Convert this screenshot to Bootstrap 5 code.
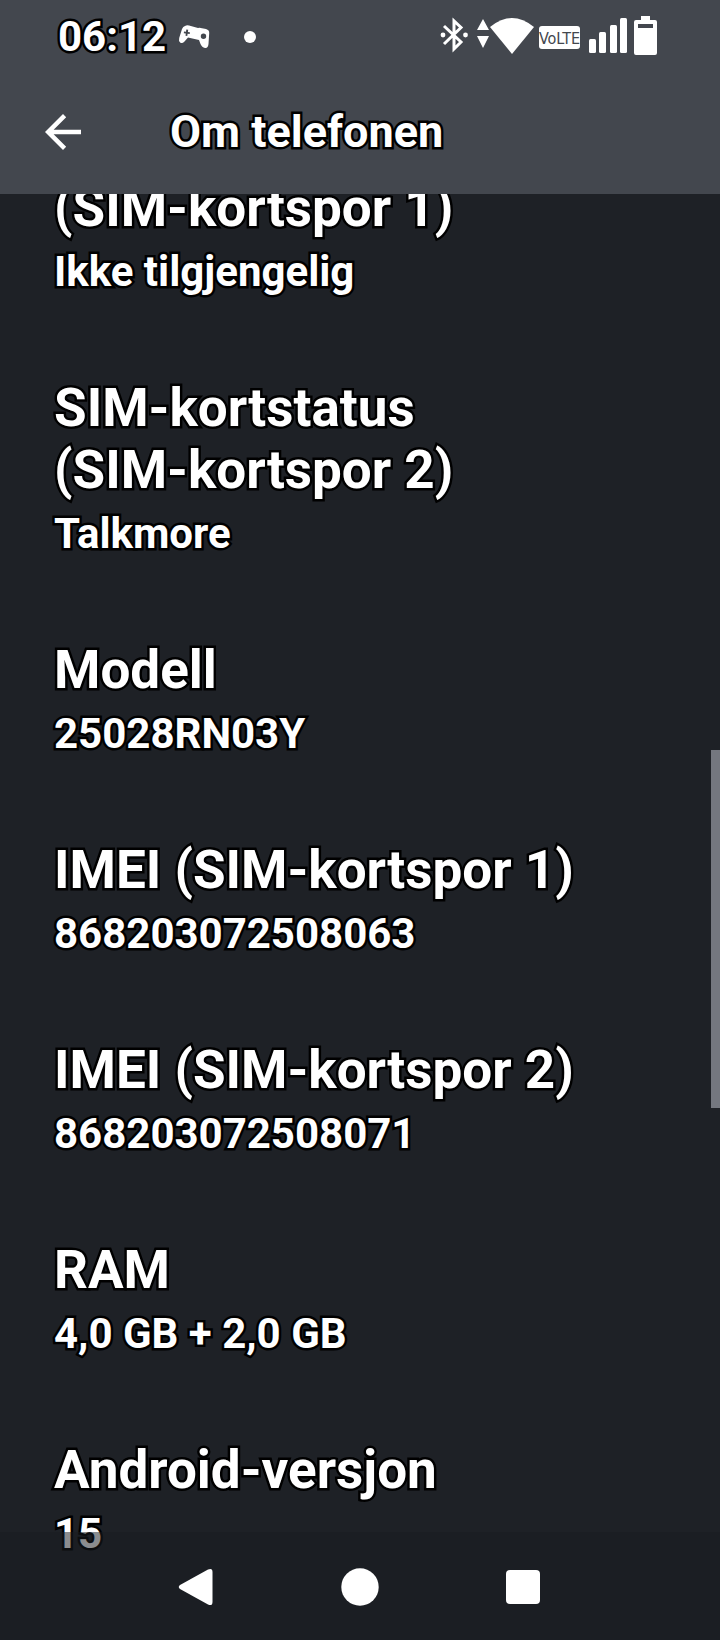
<!DOCTYPE html>
<html lang="nb" data-bs-theme="dark">
<head>
<meta charset="utf-8">
<meta name="viewport" content="width=device-width, initial-scale=1">
<title>Om telefonen</title>
<link href="https://cdn.jsdelivr.net/npm/bootstrap@5.3.0/dist/css/bootstrap.min.css" rel="stylesheet">
<style>
  body { background: #1e2126; color: #fff; font-family: Roboto, "Noto Sans", sans-serif; overflow: hidden; }
  .outlined { font-weight: 700; -webkit-text-stroke: 5px #000; paint-order: stroke fill; stroke-linejoin: round; }
  .top-area { background: #43474e; }
  .status-bar { height: 74px; padding: 0 62px 0 58px; }
  .status-time { font-size: 42px; line-height: 50px; }
  .status-left { gap: 12px; }
  .title-bar { height: 120px; padding: 0 36px 4px; gap: 80px; }
  .page-title { font-size: 45px; line-height: 54px; }
  .info-list { padding-top: 137px; }
  .info-row { padding: 40px 54px; }
  .info-name { font-size: 53px; line-height: 62px; }
  .info-value { font-size: 42px; line-height: 50px; margin-top: 8px; }
  .scroll-thumb { right: 0; top: 45.75%; width: 9px; height: 21.8%; background: #74777f; }
  .nav-keys { height: 108px; padding: 2px 16% 0; background: rgba(24, 27, 31, .5); }
  svg { display: block; flex: none; }
</style>
</head>
<body>
<header class="top-area fixed-top">
  <div class="status-bar d-flex align-items-center">
    <div class="status-left d-flex align-items-center">
      <span class="status-time outlined">06:12</span>
      <svg width="32" height="26" viewBox="0 0 32 26" fill="#fff" aria-hidden="true">
        <path fill-rule="evenodd" d="M7 2Q9 .8 11 1.600L20 4Q22 3.500 24 4.200L28 5Q31.500 6 31.200 9L30.500 20Q30 24.500 27 24T22.500 20L21 16L10 13.500L6.500 17.500Q4 20 2.200 18.500T1.200 14L4 5Q5 2.500 7 2ZM8.300 5.500L8 7.700L6 7.500L5.800 9.300L7.800 9.600L7.500 11.700L9.300 12L9.600 9.800L11.700 10L11.900 8.200L9.900 7.900L10.200 5.800ZM25.500 9.500A2.700 2.700 0 1 0 25.500 14.900A2.700 2.700 0 1 0 25.500 9.500Z"/>
      </svg>
      <svg class="ms-3" width="26" height="14" viewBox="0 0 26 14" fill="#fff" aria-hidden="true"><circle cx="12" cy="7" r="6"/></svg>
    </div>
    <svg class="ms-auto" width="218" height="42" viewBox="0 1 218 42" fill="#fff" aria-hidden="true">
      <g fill="none" stroke="#fff" stroke-width="3"><path d="M4 11L21 27L14 34V6L21 12.500L4 29"/></g>
      <circle cx="3" cy="20" r="2.400"/><circle cx="25.500" cy="20" r="2.400"/>
      <path d="M43 4L49 15H37ZM37 21H49L43 33Z"/>
      <path d="M50 12Q72-6 94 12L72 39Z"/>
      <rect x="99" y="11" width="41" height="23" rx="3"/>
      <text x="119.500" y="29" text-anchor="middle" font-family="Liberation Sans Narrow, DejaVu Sans Condensed, sans-serif" font-size="16" fill="#43474e">VoLTE</text>
      <rect x="149" y="24" width="7" height="14" rx="1.500"/><rect x="159" y="17" width="7" height="21" rx="1.500"/><rect x="170" y="10" width="7" height="28" rx="1.500"/><rect x="180" y="3" width="7" height="35" rx="1.500"/>
      <path fill-rule="evenodd" d="M201 1h9v4h5q2 0 2 2v31q0 2-2 2h-19q-2 0-2-2V7q0-2 2-2h5ZM198 9v4h15V9Z"/>
    </svg>
  </div>
  <div class="title-bar d-flex align-items-center">
    <button type="button" class="btn p-0 border-0" aria-label="Tilbake">
      <svg width="54" height="54" viewBox="0 0 24 24" fill="#fff" aria-hidden="true"><path d="M20 11H7.830l5.590-5.590L12 4l-8 8 8 8 1.410-1.410L7.830 13H20v-2z"/></svg>
    </button>
    <h1 class="page-title outlined mb-0">Om telefonen</h1>
  </div>
</header>

<main>
  <dl class="info-list mb-0">
    <div class="info-row"><dt class="info-name outlined">(SIM-kortspor 1)</dt><dd class="info-value outlined mb-0">Ikke tilgjengelig</dd></div>
    <div class="info-row"><dt class="info-name outlined">SIM-kortstatus<br>(SIM-kortspor 2)</dt><dd class="info-value outlined mb-0">Talkmore</dd></div>
    <div class="info-row"><dt class="info-name outlined">Modell</dt><dd class="info-value outlined mb-0">25028RN03Y</dd></div>
    <div class="info-row"><dt class="info-name outlined">IMEI (SIM-kortspor 1)</dt><dd class="info-value outlined mb-0">868203072508063</dd></div>
    <div class="info-row"><dt class="info-name outlined">IMEI (SIM-kortspor 2)</dt><dd class="info-value outlined mb-0">868203072508071</dd></div>
    <div class="info-row"><dt class="info-name outlined">RAM</dt><dd class="info-value outlined mb-0">4,0 GB + 2,0 GB</dd></div>
    <div class="info-row"><dt class="info-name outlined">Android-versjon</dt><dd class="info-value outlined mb-0">15</dd></div>
  </dl>
</main>
<div class="scroll-thumb position-fixed"></div>

<nav class="nav-keys fixed-bottom d-flex align-items-center" aria-label="Systemnavigasjon">
  <button type="button" class="btn p-0 border-0 flex-fill d-flex justify-content-center" aria-label="Tilbake"><svg width="38" height="38" viewBox="0 0 38 38" fill="#fff"><path d="M2 17L30 1.500Q34.500-.5 34.500 4V34Q34.500 38.500 30 36.500L2 21Q-.5 19 2 17Z"/></svg></button>
  <button type="button" class="btn p-0 border-0 flex-fill d-flex justify-content-center" aria-label="Hjem"><svg width="38" height="38" viewBox="0 0 38 38" fill="#fff"><circle cx="19" cy="19" r="18.700"/></svg></button>
  <button type="button" class="btn p-0 border-0 flex-fill d-flex justify-content-center" aria-label="Oversikt"><svg width="38" height="38" viewBox="0 0 38 38" fill="#fff"><rect x="2" y="2" width="34" height="34" rx="4"/></svg></button>
</nav>
<script src="https://cdn.jsdelivr.net/npm/bootstrap@5.3.0/dist/js/bootstrap.bundle.min.js"></script>
</body>
</html>
